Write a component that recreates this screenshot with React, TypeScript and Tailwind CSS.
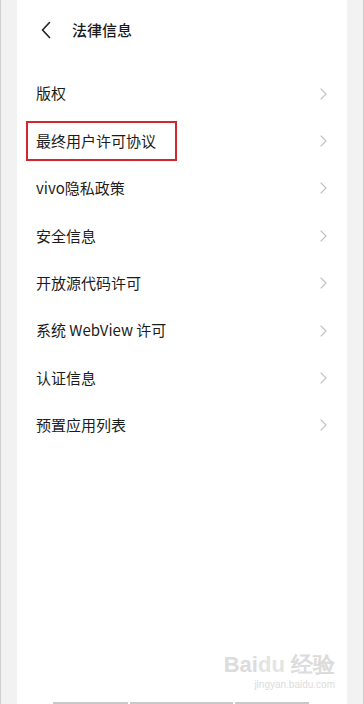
import React from "react";

const items = [
  "版权",
  "最终用户许可协议",
  "vivo隐私政策",
  "安全信息",
  "开放源代码许可",
  "系统 WebView 许可",
  "认证信息",
  "预置应用列表",
];

export default function App() {
  return (
    <div
      className="flex h-[704px] w-[364px] overflow-hidden bg-white"
      style={{ fontFamily: '"Noto Sans CJK SC", "Noto Sans", sans-serif' }}
    >
      <div className="w-[17px] shrink-0 border-l border-[#cfcfcf] bg-[#f2f2f2]" />
      <div className="relative flex flex-1 flex-col bg-white">
        <div className="flex h-[60px] items-center pl-[24px]">
          <svg width="10" height="18" viewBox="0 0 10 18" fill="none">
            <path d="M8.5 1.5 L1.5 9 L8.5 16.5" stroke="#222" strokeWidth="1.6" strokeLinecap="round" strokeLinejoin="round" />
          </svg>
          <span className="ml-[21px] text-[15px] font-medium text-[#1a1a1a]">法律信息</span>
        </div>
        <div className="pt-[10px]">
          {items.map((t) => (
            <div key={t} className="flex h-[47.4px] items-center justify-between pl-[19px] pr-[20px]">
              <span className="text-[15px] text-[#1c1c1c]">{t}</span>
              <svg width="7" height="12" viewBox="0 0 7 12" fill="none">
                <path d="M1 1 L6 6 L1 11" stroke="#c4c4c4" strokeWidth="1.2" strokeLinecap="round" strokeLinejoin="round" />
              </svg>
            </div>
          ))}
        </div>
        <div className="absolute left-[9px] top-[121px] h-[40px] w-[151px] border-2 border-[#d32630]" />
        <div className="absolute bottom-[14px] right-[12px] text-right leading-none text-[#dcdcdc]">
          <div className="text-[22px] font-bold" style={{ fontFamily: '"Liberation Sans", sans-serif' }}>Bai<span className="text-[#e4e4e4]">du</span> 经验</div>
          <div className="mt-[4px] text-[10px]" style={{ fontFamily: '"Liberation Sans", sans-serif' }}>jingyan.baidu.com</div>
        </div>
        <div className="absolute bottom-0 left-[36px] flex gap-[2px]">
          <div className="h-[2px] w-[75px] bg-[#c8c8c8]" />
          <div className="h-[2px] w-[103px] bg-[#c8c8c8]" />
          <div className="h-[2px] w-[74px] bg-[#c8c8c8]" />
        </div>
      </div>
      <div className="w-[17px] shrink-0 border-r border-[#cfcfcf] bg-[#f2f2f2]" />
    </div>
  );
}
